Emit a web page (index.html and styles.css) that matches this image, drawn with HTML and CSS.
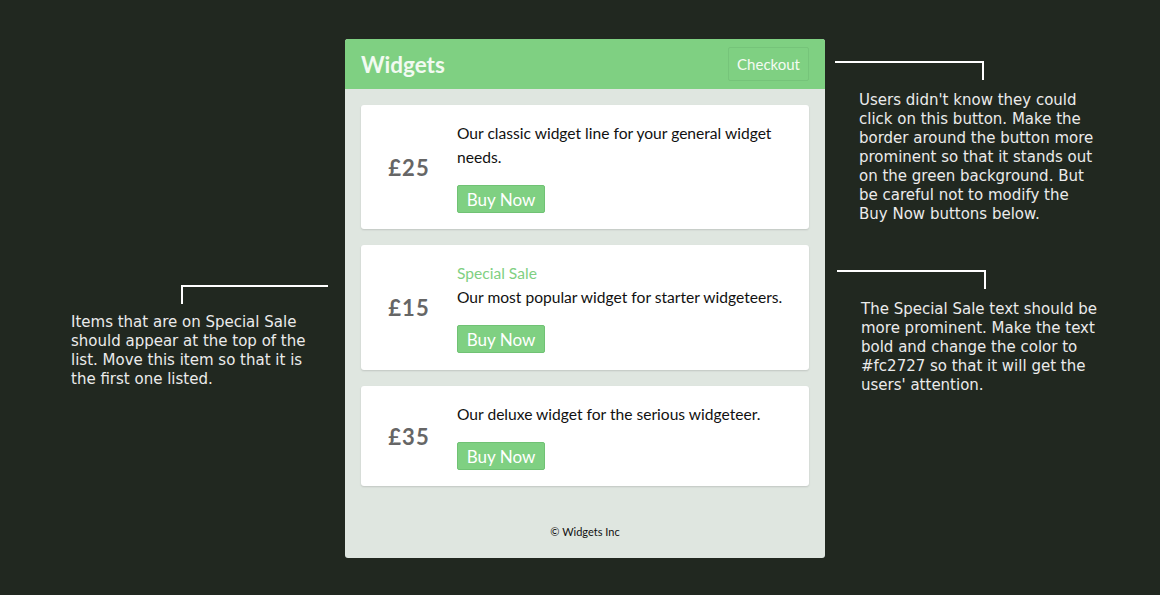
FILE: index.html
```html
<!DOCTYPE html>
<html>
<head>
<meta charset="utf-8">
<link rel="stylesheet" href="styles.css">
</head>
<body>
<div class="page">
  <div class="panel">
    <header class="header">
      <h1 class="title">Widgets</h1>
      <button class="checkout">Checkout</button>
    </header>
    <main class="list">
      <div class="card">
        <div class="price">£25</div>
        <div class="info">
          <p class="desc">Our classic widget line for your general widget needs.</p>
          <button class="buy">Buy Now</button>
        </div>
      </div>
      <div class="card card-sale-pad">
        <div class="price">£15</div>
        <div class="info">
          <div class="sale">Special Sale</div>
          <p class="desc">Our most popular widget for starter widgeteers.</p>
          <button class="buy">Buy Now</button>
        </div>
      </div>
      <div class="card">
        <div class="price">£35</div>
        <div class="info">
          <p class="desc">Our deluxe widget for the serious widgeteer.</p>
          <button class="buy">Buy Now</button>
        </div>
      </div>
    </main>
    <footer class="footer">© Widgets Inc</footer>
  </div>

  <div class="note note-checkout">
    <div class="connector conn-right"></div>
    <p class="note-text">Users didn't know they could<br>click on this button. Make the<br>border around the button more<br>prominent so that it stands out<br>on the green background. But<br>be careful not to modify the<br>Buy Now buttons below.</p>
  </div>

  <div class="note note-sale">
    <div class="connector conn-right"></div>
    <p class="note-text">The Special Sale text should be<br>more prominent. Make the text<br>bold and change the color to<br>#fc2727 so that it will get the<br>users' attention.</p>
  </div>

  <div class="note note-order">
    <div class="connector conn-left"></div>
    <p class="note-text">Items that are on Special Sale<br>should appear at the top of the<br>list. Move this item so that it is<br>the first one listed.</p>
  </div>
</div>
</body>
</html>
```

FILE: styles.css
```css
* { box-sizing: border-box; }
html, body { margin: 0; padding: 0; }
body {
  background: #212820;
  font-family: Lato, "Open Sans", sans-serif;
  width: 1160px;
  height: 595px;
  overflow: hidden;
}
.page {
  position: relative;
  width: 1160px;
  height: 595px;
  padding-top: 39px;
}
.panel {
  margin-left: 345px;
  width: 480px;
  background: #dfe6e0;
  border-radius: 3px;
  overflow: hidden;
}
.header {
  height: 50px;
  background: #7fd082;
  display: flex;
  align-items: center;
  justify-content: space-between;
  padding: 0 16px;
}
.title {
  margin: 0;
  font-size: 22.5px;
  font-weight: 700;
  color: #f2faf1;
}
.checkout {
  height: 34px;
  padding: 0 8px;
  background: transparent;
  border: 1px solid #76c47a;
  border-radius: 2px;
  color: #f4fbf3;
  font-family: inherit;
  font-size: 15px;
}
.list {
  padding: 16px;
  display: flex;
  flex-direction: column;
  gap: 16px;
}
.card {
  background: #fff;
  border-radius: 3px;
  box-shadow: 0 1px 2px rgba(0,0,0,0.14);
  display: flex;
  align-items: center;
  padding: 16px 0;
}
.price {
  width: 96px;
  text-align: center;
  font-size: 22px;
  font-weight: 700;
  color: #666;
  letter-spacing: 1px;
}
.info {
  flex: 1;
  padding-right: 16px;
}
.sale {
  color: #7fd082;
  font-size: 15.6px;
  line-height: 24px;
}
.desc {
  margin: 0;
  font-size: 15.6px;
  line-height: 24px;
  color: #111;
}
.card-sale-pad { padding-bottom: 17px; }
.buy {
  margin-top: 16px;
  height: 28px;
  width: 88px;
  padding: 0;
  background: #7fd082;
  border: 1px solid #70c274;
  border-radius: 2px;
  color: #fff;
  font-family: inherit;
  font-size: 17px;
  display: block;
}
.footer {
  height: 56px;
  display: flex;
  align-items: center;
  justify-content: center;
  font-size: 11px;
  color: #111;
  padding-top: 2px;
}
.note {
  position: absolute;
}
.connector {
  height: 19px;
  border-top: 2px solid #fff;
}
.conn-right { border-right: 2px solid #fff; width: 149px; }
.conn-left { border-left: 2px solid #fff; width: 147px; }
.note-text {
  margin: 0;
  font-family: "DejaVu Sans", sans-serif;
  font-size: 15px;
  line-height: 19px;
  color: #ebebeb;
  white-space: nowrap;
}
.note-checkout { left: 835px; top: 61px; }
.note-checkout .note-text { margin-left: 24px; margin-top: 11px; }
.note-sale { left: 837px; top: 270px; }
.note-sale .note-text { margin-left: 24px; margin-top: 11px; }
.note-order { left: 181px; top: 285px; }
.note-order .note-text { margin-left: -110px; margin-top: 9px; }
```
